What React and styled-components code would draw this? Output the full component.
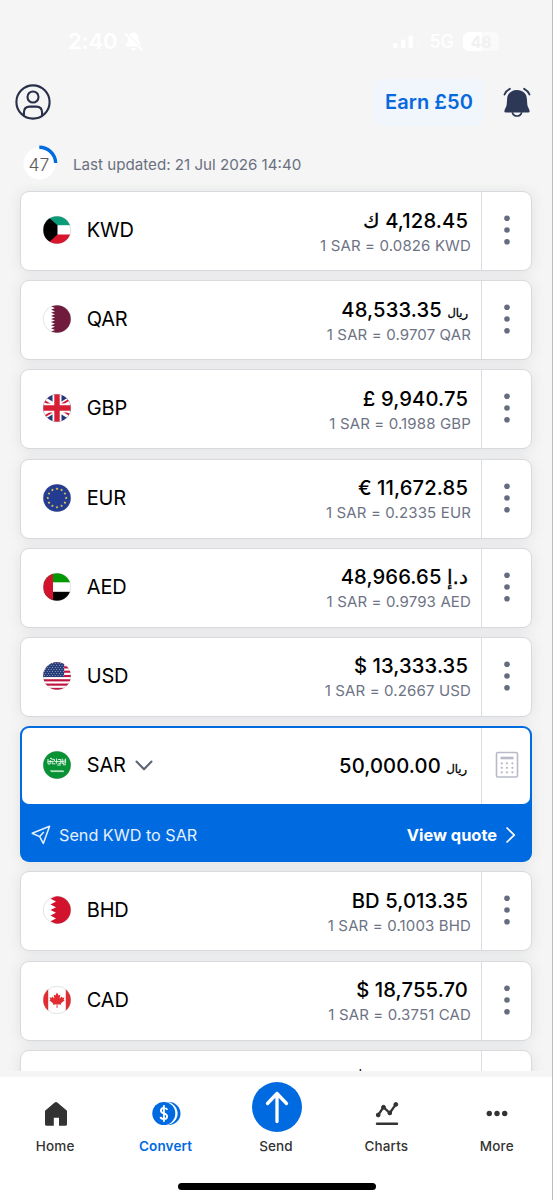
import React from 'react';
import styled, { createGlobalStyle, css } from 'styled-components';

const GlobalStyle = createGlobalStyle`
  *, *::before, *::after { box-sizing: border-box; }
  body { margin: 0; background: #f5f5f5; font-family: Inter, "DejaVu Sans", sans-serif; }
  svg { display: block; flex: none; }
`;

const Screen = styled.div`
  display: flex;
  flex-direction: column;
  width: 553px;
  height: 1200px;
  background: #f5f5f5;
  border-right: 1px solid #bdbdbf;
  overflow: hidden;
`;

const StatusBar = styled.div`
  display: flex;
  align-items: center;
  justify-content: space-between;
  height: 82px;
  padding: 0 53px 0 68px;
  color: #fff;
  font-weight: 600;
`;

const StatusGroup = styled.div`
  display: flex;
  align-items: center;
  gap: ${(p) => p.$gap}px;
`;

const Clock = styled.span`
  font-size: 22px;
  letter-spacing: -0.1px;
`;

const Network = styled.span`
  font-size: 18px;
  font-weight: 500;
`;

const Battery = styled.span`
  display: grid;
  place-items: center;
  width: 36px;
  height: 19px;
  border-radius: 6px;
  background: linear-gradient(90deg, #fff 50%, #fafafa 50%);
  color: #f1f1f1;
  font-size: 16px;
  font-weight: 700;
`;

const Header = styled.header`
  display: flex;
  align-items: center;
  height: 40px;
  padding: 0 21px 0 15px;
`;

const EarnButton = styled.button`
  margin: 0 19px 0 auto;
  width: 111px;
  height: 47px;
  padding: 0 0 0 1px;
  border: 0;
  border-radius: 8px;
  background: #f1f5fc;
  color: #0769dc;
  font: 600 20px Inter, sans-serif;
  letter-spacing: 0.05px;
`;

const UpdateRow = styled.div`
  display: flex;
  align-items: center;
  gap: 15px;
  height: 62px;
  padding: 21px 0 0 21px;
  color: #6a7080;
  font-size: 15.15px;
`;

const UpdateText = styled.span`
  padding-top: 1px;
`;

const Timer = styled.div`
  display: grid;
  place-items: center;
  width: 37px;
  height: 37px;

  & > * { grid-area: 1 / 1; }
`;

const TimerValue = styled.span`
  color: #5c5c5c;
  font-size: 17.5px;
  font-weight: 300;
  margin: 2px 1px 0 0;
`;

const List = styled.main`
  display: flex;
  flex-direction: column;
  flex: none;
  gap: 9.2px;
  height: 887px;
  padding: 7px 20px 0 20px;
  overflow: hidden;
`;

const cardShadow = css`
  box-shadow: 0 1px 14px rgba(60, 70, 95, 0.11);
`;

const Card = styled.section`
  display: flex;
  flex: none;
  height: 80px;
  background: #fff;
  border: 1px solid #d9dade;
  border-radius: 9px;
  ${cardShadow}
`;

const ActiveCard = styled.section`
  flex: none;
  height: 136px;
  padding: 2px;
  background: #006ae1;
  border-radius: 9px;
  ${cardShadow}
`;

const ActiveTop = styled.div`
  display: flex;
  height: 76px;
  background: #fff;
  border-radius: 7px;
`;

const Currency = styled.div`
  display: flex;
  align-items: center;
  flex: 1;
  padding-left: ${(p) => (p.$active ? 19.8 : 20.8)}px;
  padding-bottom: ${(p) => (p.$active ? 3 : 2)}px;
`;

const Code = styled.span`
  margin-left: 15px;
  color: #000;
  font-size: 20px;
  letter-spacing: -0.2px;
`;

const Figures = styled.div`
  display: flex;
  flex-direction: column;
  justify-content: center;
  align-items: flex-end;
  padding-right: ${(p) => (p.$active ? 11 : 10)}px;
  padding-top: ${(p) => (p.$active ? 0 : 2)}px;
  padding-bottom: ${(p) => (p.$active ? 3 : 0)}px;
`;

const Amount = styled.div`
  display: flex;
  align-items: baseline;
  gap: 5.5px;
  height: 26px;
  line-height: 27px;
  padding-right: ${(p) => p.$inset ?? 3}px;
  color: #000;
  font-size: 20.2px;
  font-weight: 500;
  letter-spacing: 0.12px;
`;

const Symbol = styled.span`
  font-size: ${(p) => (p.$compact ? 11.5 : 20.2)}px;
  font-weight: ${(p) => (p.$arabic ? 400 : 500)};
  font-family: ${(p) => (p.$arabic ? '"DejaVu Sans"' : 'Inter')}, sans-serif;
  letter-spacing: 0;
  -webkit-text-stroke: ${(p) => (p.$arabic ? 0.3 : 0)}px currentColor;
`;

const Rate = styled.div`
  height: 25px;
  line-height: 26px;
  color: #6d7385;
  font-size: 15px;
  letter-spacing: 0.14px;
`;

const Menu = styled.div`
  display: grid;
  place-items: center;
  width: ${(p) => (p.$active ? 49 : 50)}px;
  padding-left: ${(p) => (p.$active ? 2 : 0)}px;
  padding-bottom: 2px;
  border-left: 1px solid #dcdde0;
`;

const QuoteBar = styled.div`
  display: flex;
  align-items: center;
  justify-content: space-between;
  height: 56px;
  padding: 5px 14px 0 9px;
  color: #fff;
`;

const QuoteText = styled.span`
  display: flex;
  align-items: center;
  gap: 8px;
  color: #e6f0ff;
  font-size: 16.2px;
`;

const QuoteLink = styled.span`
  display: flex;
  align-items: center;
  gap: 8px;
  font-size: 16.4px;
  font-weight: 700;
`;

const NavBar = styled.nav`
  display: grid;
  grid-template-columns: repeat(5, 1fr);
  flex: none;
  height: 106px;
`;

const NavItem = styled.div`
  display: flex;
  flex-direction: column;
  align-items: center;
  color: ${(p) => (p.$active ? '#006ae1' : '#333')};
  font-size: 13.5px;
  font-weight: ${(p) => (p.$active ? 600 : 500)};
  letter-spacing: 0.15px;
`;

const NavIcon = styled.div`
  display: grid;
  place-items: center;
  height: 61px;
  padding: ${(p) => (p.$large ? '0 0 1px 2px' : '12px 0 0 1px')};
`;

const HomeIndicator = styled.div`
  flex: none;
  align-self: center;
  width: 198px;
  height: 7px;
  margin-left: 1px;
  border-radius: 4px;
  background: #000;
`;

const Footer = styled.div`
  flex: 1;
  display: flex;
  flex-direction: column;
  margin-top: 6px;
  background: #fff;
`;

const star = (cx, cy, r) =>
  Array.from({ length: 10 }, (_, i) => {
    const a = -Math.PI / 2 + (i * Math.PI) / 5;
    const q = i % 2 ? r * 0.4 : r;
    return `${cx + q * Math.cos(a)},${cy + q * Math.sin(a)}`;
  }).join(' ');

const teeth = (count, left, right) => {
  const h = 28 / count;
  let d = `M28 0H${right}`;
  for (let i = 0; i < count; i += 1) d += `L${left} ${h * (i + 0.5)}L${right} ${h * (i + 1)}`;
  return `${d}H28Z`;
};

const flagArt = {
  KWD: (
    <>
      <rect width="28" height="9.2" fill="#0a9b78" />
      <rect y="18.5" width="28" height="10" fill="#d9152e" />
      <path d="M0 0H4L14.5 9.2V18.5L4 28H0Z" fill="#000" />
    </>
  ),
  QAR: <path d={teeth(9, 8, 12)} fill="#701a3d" />,
  GBP: (
    <>
      <rect width="28" height="28" fill="#26347a" />
      <path d="M-4 3L32 25M32 3L-4 25" stroke="#fff" strokeWidth="6.5" />
      <path d="M-4 3.8L14 14.8M32 2.2L14 13.2M-4 25.8L14 14.8M32 24.2L14 13.2" stroke="#d61f35" strokeWidth="2" />
      <path d="M14 0V28M0 14H28" stroke="#fff" strokeWidth="9" />
      <path d="M14 0V28M0 14H28" stroke="#d61f35" strokeWidth="5.4" />
    </>
  ),
  EUR: (
    <>
      <rect width="28" height="28" fill="#243b92" />
      {Array.from({ length: 12 }, (_, i) => (
        <polygon
          key={i}
          points={star(14 + 9.2 * Math.sin((i * Math.PI) / 6), 14 - 9.2 * Math.cos((i * Math.PI) / 6), 1.6)}
          fill="#f5db45"
        />
      ))}
    </>
  ),
  AED: (
    <>
      <rect width="28" height="9.3" fill="#009a00" />
      <rect y="18.8" width="28" height="9.2" fill="#000" />
      <rect width="10" height="28" fill="#d3132d" />
    </>
  ),
  USD: (
    <>
      {[0, 1, 2, 3, 4, 5, 6].map((i) => (
        <rect key={i} y={i * 4.31} width="28" height="2.15" fill="#c01440" />
      ))}
      <rect width="21" height="15" fill="#243b78" />
      {Array.from({ length: 7 }, (_, r) =>
        Array.from({ length: 8 }, (_, c) => (
          <circle key={`${r}-${c}`} cx={1.5 + c * 2.7 + (r % 2) * 1.3} cy={1.3 + r * 2.05} r="0.5" fill="#b3c0dd" />
        ))
      )}
    </>
  ),
  SAR: (
    <>
      <rect width="28" height="28" fill="#079233" />
      <path
        d="M5 8v5h2.2V9M8.5 8.3h3v2H9.2v2.5h3.2M13.6 7.5v5.2M15 8.5h2.8v4h-2.4M19.2 7.6v5h1.9V8.4M22.6 7.6v5M4.4 10.5h5M12 10.6h9M7 7.4h2M14 14h4M20 13.8h3"
        fill="none"
        stroke="#e4f4e9"
        strokeWidth="0.95"
      />
      <path d="M7 19.8H20.5M8 20.6H21" stroke="#e4f4e9" strokeWidth="0.8" />
    </>
  ),
  BHD: <path d={teeth(5, 7.5, 13)} fill="#d3132d" />,
  CAD: (
    <>
      <rect width="5.2" height="28" fill="#e12c32" />
      <rect x="22.8" width="5.2" height="28" fill="#e12c32" />
      <path
        d="M14 6.6l1.6 2.8 1.7-.8-.7 4 2.2-2 .5 1.2 2.1-.3-.8 2.2 1 .6-3.8 3.1.4 1.3-3.7-.5v3.8h-.9v-3.8l-3.8.5.4-1.3-3.8-3.1 1-.6-.8-2.2 2.1.3.5-1.2 2.2 2-.7-4 1.7.8Z"
        fill="#e12c32"
      />
    </>
  ),
};

const Flag = ({ code }) => (
  <svg width="30" height="30" viewBox="-1 -1 30 30">
    <defs>
      <clipPath id={`flag-${code}`}>
        <circle cx="14" cy="14" r="13.8" />
      </clipPath>
    </defs>
    <g clipPath={`url(#flag-${code})`}>
      <rect width="28" height="28" fill="#fff" />
      {flagArt[code]}
    </g>
    <circle cx="14" cy="14" r="13.8" fill="none" stroke="#7a7a80" strokeOpacity="0.35" strokeWidth="0.6" />
  </svg>
);

const Dots = () => (
  <svg width="8" height="32" viewBox="0 0 8 32" fill="#646c80">
    <circle cx="4" cy="4.2" r="2.8" />
    <circle cx="4" cy="16" r="2.8" />
    <circle cx="4" cy="27.8" r="2.8" />
  </svg>
);

const Calculator = () => (
  <svg width="24" height="28" viewBox="0 0 24 28">
    <rect x="1.5" y="1.5" width="21" height="24.5" rx="1.5" fill="none" stroke="#b8bac7" strokeWidth="1.6" />
    <rect x="5.5" y="5.7" width="13" height="2.6" fill="#b8bac7" />
    {[12.3, 16.8, 21.3].map((y) => [6.8, 12, 17.4].map((x) => <circle key={`${x}-${y}`} cx={x} cy={y} r="1.15" fill="#b8bac7" />))}
  </svg>
);

const UserIcon = () => (
  <svg width="36" height="36" viewBox="0 0 36 36" fill="none" stroke="#272f49" strokeWidth="2.1">
    <circle cx="18" cy="18" r="16.6" />
    <circle cx="18" cy="13" r="5.5" />
    <path d="M8.9 31.5V28.5Q8.9 22.6 14.8 22.6H21.2Q27.1 22.6 27.1 28.5V31.5" />
  </svg>
);

const BellIcon = () => (
  <svg width="28" height="30" viewBox="0 0 28 30">
    <path
      d="M14 3C8.2 3 4.3 6.7 4.1 12L3.7 17.5C3.6 19.8 1.6 22 1.4 23.8Q1.2 25.5 2.8 25.5H25.2Q26.8 25.5 26.6 23.8C26.4 22 24.4 19.8 24.3 17.5L23.9 12C23.7 6.7 19.8 3 14 3Z"
      fill="#2c3856"
    />
    <path d="M9.3 25.2Q10.2 29 14 29T18.7 25.2" fill="none" stroke="#2c3856" strokeWidth="1.7" />
    <path d="M1.5 7.5Q3 3.8 6.8 1.8M26.5 7.5Q25 3.8 21.2 1.8" fill="none" stroke="#2c3856" strokeWidth="1.9" strokeLinecap="round" />
  </svg>
);

const MutedBell = () => (
  <svg width="21" height="21" viewBox="0 0 21 21">
    <path d="M10.5 1.5C7.5 1.5 5.3 4 5.3 7C5.3 11.5 3 12.7 3 14.3V15.5H18V14.3C18 12.7 15.7 11.5 15.7 7C15.7 4 13.5 1.5 10.5 1.5ZM8 17H13Q12.7 19.5 10.5 19.5T8 17Z" fill="#fff" />
    <path d="M3 2L20 18.3" stroke="#f5f5f5" strokeWidth="1.6" />
    <path d="M1.5 2.2L19.5 19.3" stroke="#fff" strokeWidth="1.6" />
  </svg>
);

const Signal = () => (
  <svg width="27" height="15" viewBox="0 0 27 15" fill="#fff">
    <rect y="9" width="4.4" height="5" rx="1.2" />
    <rect x="8" y="5.5" width="4.4" height="8.5" rx="1.2" />
    <rect x="15.5" y="1.5" width="4.4" height="12.5" rx="1.2" />
    <rect x="23.5" y="0" width="3.4" height="14" rx="1.2" fillOpacity="0.15" />
  </svg>
);

const HomeIcon = () => (
  <svg width="24" height="26" viewBox="0 0 24 26">
    <path d="M1 9.7L10.7 1.4Q12 .4 13.3 1.4L23 9.7V23.2Q23 24.8 21.4 24.8H15V16.7H9.8V24.8H2.6Q1 24.8 1 23.2Z" fill="#333" />
  </svg>
);

const ConvertIcon = () => (
  <svg width="29" height="25" viewBox="0 0 29 25">
    <circle cx="17.1" cy="12.5" r="11.4" fill="#006ae1" />
    <circle cx="14.2" cy="12.5" r="11.4" fill="#fff" />
    <circle cx="11.8" cy="12.5" r="11.5" fill="#006ae1" />
    <path d="M15.3 8.8Q14.6 6.9 11.9 6.9T8.9 9.5Q8.9 11.7 11.9 12.4T15.1 15.4Q15.1 18 11.9 18T8.6 15.9M11.9 4.3V20.7" fill="none" stroke="#fff" strokeWidth="1.9" />
  </svg>
);

const SendIcon = () => (
  <svg width="50" height="50" viewBox="0 0 50 50">
    <circle cx="25" cy="25" r="25" fill="#006ae1" />
    <path d="M25 39.5V11.5M15.5 21.5L25 11.5L34.5 21.5" fill="none" stroke="#fff" strokeWidth="3.3" strokeLinecap="round" strokeLinejoin="round" />
  </svg>
);

const ChartsIcon = () => (
  <svg width="24" height="25" viewBox="0 0 24 25" fill="#333" stroke="#333">
    <path d="M3.2 14L8.5 6.2L14.8 12L20.8 3.4" fill="none" strokeWidth="2.3" />
    <circle cx="3.2" cy="14" r="1.9" />
    <circle cx="8.5" cy="6.2" r="1.9" />
    <circle cx="14.8" cy="12" r="1.9" />
    <circle cx="20.8" cy="3.4" r="1.9" />
    <path d="M2 22.8H22" strokeWidth="2.4" strokeLinecap="round" />
  </svg>
);

const MoreIcon = () => (
  <svg width="22" height="8" viewBox="0 0 22 8" fill="#333">
    <circle cx="3.3" cy="3.5" r="2.7" />
    <circle cx="11" cy="3.5" r="2.7" />
    <circle cx="18.7" cy="3.5" r="2.7" />
  </svg>
);

const before = [
  { code: 'KWD', amount: '4,128.45', symbol: 'ك', arabic: true, rate: '0.0826' },
  { code: 'QAR', amount: '48,533.35', symbol: 'ريال', arabic: true, compact: true, after: true, rate: '0.9707' },
  { code: 'GBP', amount: '9,940.75', symbol: '£', rate: '0.1988' },
  { code: 'EUR', amount: '11,672.85', symbol: '€', rate: '0.2335' },
  { code: 'AED', amount: '48,966.65', symbol: 'د.إ', arabic: true, after: true, rate: '0.9793' },
  { code: 'USD', amount: '13,333.35', symbol: '$', rate: '0.2667' },
];

const afterActive = [
  { code: 'BHD', amount: '5,013.35', symbol: 'BD', rate: '0.1003' },
  { code: 'CAD', amount: '18,755.70', symbol: '$', rate: '0.3751' },
];

const Money = ({ amount, symbol, arabic, compact, after }) => {
  const sign = (
    <Symbol $arabic={arabic} $compact={compact} dir={arabic ? 'rtl' : 'ltr'}>
      {symbol}
    </Symbol>
  );
  return (
    <Amount>
      {!after && sign}
      <span>{amount}</span>
      {after && sign}
    </Amount>
  );
};

const CurrencyCard = ({ item }) => (
  <Card>
    <Currency>
      <Flag code={item.code} />
      <Code>{item.code}</Code>
    </Currency>
    <Figures>
      <Money {...item} />
      <Rate>{`1 SAR = ${item.rate} ${item.code}`}</Rate>
    </Figures>
    <Menu>
      <Dots />
    </Menu>
  </Card>
);

const Chevron = styled.svg`
  margin-left: 9px;
`;

const navItems = [
  { label: 'Home', icon: <HomeIcon /> },
  { label: 'Convert', icon: <ConvertIcon />, active: true },
  { label: 'Send', icon: <SendIcon />, large: true },
  { label: 'Charts', icon: <ChartsIcon /> },
  { label: 'More', icon: <MoreIcon /> },
];

export default function App() {
  return (
    <>
      <GlobalStyle />
      <Screen>
        <StatusBar>
          <StatusGroup $gap={5}>
            <Clock>2:40</Clock>
            <MutedBell />
          </StatusGroup>
          <StatusGroup $gap={9}>
            <Signal />
            <Network>5G</Network>
            <Battery>48</Battery>
          </StatusGroup>
        </StatusBar>
        <Header>
          <UserIcon />
          <EarnButton>Earn £50</EarnButton>
          <BellIcon />
        </Header>
        <UpdateRow>
          <Timer>
            <svg width="37" height="37" viewBox="0 0 37 37">
              <circle cx="18.5" cy="18.5" r="16" fill="#fff" />
              <path d="M18.3 2.2A16.4 16.4 0 0 1 34.7 18" fill="none" stroke="#006ae1" strokeWidth="3.4" />
            </svg>
            <TimerValue>47</TimerValue>
          </Timer>
          <UpdateText>Last updated: 21 Jul 2026 14:40</UpdateText>
        </UpdateRow>
        <List>
          {before.map((item) => (
            <CurrencyCard key={item.code} item={item} />
          ))}
          <ActiveCard>
            <ActiveTop>
              <Currency $active>
                <Flag code="SAR" />
                <Code>SAR</Code>
                <Chevron width="18" height="12" viewBox="0 0 18 12" fill="none" stroke="#596174" strokeWidth="2" strokeLinecap="round" strokeLinejoin="round">
                  <path d="M1.5 2.5L9 10.3L16.5 2.5" />
                </Chevron>
              </Currency>
              <Figures $active>
                <Money amount="50,000.00" symbol="ريال" arabic compact after />
              </Figures>
              <Menu $active>
                <Calculator />
              </Menu>
            </ActiveTop>
            <QuoteBar>
              <QuoteText>
                <svg width="20" height="20" viewBox="0 0 20 20" fill="none" stroke="#e6f0ff" strokeWidth="1.5" strokeLinejoin="round">
                  <path d="M1.2 8.2L18.6 1.2L12.3 18.4L8.7 11.6ZM8.7 11.6L12.8 7" />
                </svg>
                Send KWD to SAR
              </QuoteText>
              <QuoteLink>
                View quote
                <svg width="11" height="18" viewBox="0 0 11 18" fill="none" stroke="#fff" strokeWidth="1.7">
                  <path d="M1.5 1.5L9.2 9L1.5 16.5" />
                </svg>
              </QuoteLink>
            </QuoteBar>
          </ActiveCard>
          {afterActive.map((item) => (
            <CurrencyCard key={item.code} item={item} />
          ))}
          <Card>
            <Currency />
            <Figures>
              <Amount $inset={104}>$</Amount>
              <Rate />
            </Figures>
            <Menu />
          </Card>
        </List>
        <Footer>
          <NavBar>
            {navItems.map((item) => (
              <NavItem key={item.label} $active={item.active}>
                <NavIcon $large={item.large}>{item.icon}</NavIcon>
                {item.label}
              </NavItem>
            ))}
          </NavBar>
          <HomeIndicator />
        </Footer>
      </Screen>
    </>
  );
}
